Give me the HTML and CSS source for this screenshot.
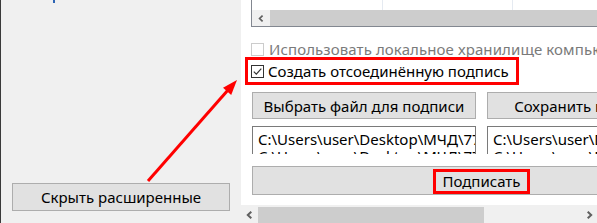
FILE: index.html
```html
<!DOCTYPE html>
<html lang="ru">
<head>
<meta charset="utf-8">
<title>Подпись</title>
<link rel="stylesheet" href="styles.css">
</head>
<body>
<div class="window">
  <aside class="left">
    <div class="caret"></div>
    <button class="btn hide-btn">Скрыть расширенные</button>
  </aside>
  <section class="right">
    <div class="content">
      <div class="listview">
        <div class="rows"><span class="cell"></span><span class="cell"></span><span class="cell last"></span></div>
        <div class="scroll small">
          <span class="sarrow"><svg width="6" height="7" viewBox="0 0 6 7"><path d="M4.6 0.6 L1.6 3.5 L4.6 6.4" fill="none" stroke="#606060" stroke-width="1.7"/></svg></span>
          <span class="thumb fill"></span>
        </div>
      </div>
      <label class="check disabled"><span class="box"></span><span class="label">Использовать локальное хранилище компьютера</span></label>
      <label class="check marked"><span class="box"><svg width="11" height="11" viewBox="0 0 11 11"><path d="M1.8 5.6 L4.3 8.1 L9.3 2.6" fill="none" stroke="#333" stroke-width="1.2"/></svg></span><span class="label">Создать отсоединённую подпись</span></label>
      <div class="pair">
        <button class="btn half">Выбрать файл для подписи</button>
        <button class="btn half">Сохранить подпись как</button>
      </div>
      <div class="pair">
        <div class="textbox">C:\Users\user\Desktop\МЧД\7707083893.xml<br>C:\Users\user\Desktop\МЧД\7707083893.xml</div>
        <div class="textbox">C:\Users\user\Desktop\МЧД\7707083893.xml.sig<br>C:\Users\user\Desktop\МЧД\7707083893.xml.sig</div>
      </div>
      <button class="btn wide"><span class="mark">Подписать</span></button>
    </div>
    <div class="scroll big">
      <span class="sarrow"><svg width="7" height="8" viewBox="0 0 7 8"><path d="M5.3 0.7 L1.8 4 L5.3 7.3" fill="none" stroke="#606060" stroke-width="2"/></svg></span>
      <span class="thumb main"></span>
      <span class="spacer"></span>
      <span class="sarrow right"><svg width="7" height="8" viewBox="0 0 7 8"><path d="M1.7 0.7 L5.2 4 L1.7 7.3" fill="none" stroke="#606060" stroke-width="2"/></svg></span>
    </div>
  </section>
  <svg class="annot" width="597" height="223" viewBox="0 0 597 223">
    <line x1="148" y1="181" x2="228" y2="90" stroke="#ff0000" stroke-width="3"/>
    <polygon points="237,80 223,87.7 231.2,95" fill="#ff0000"/>
  </svg>
</div>
</body>
</html>
```

FILE: styles.css
```css
* { box-sizing: border-box; }
html, body { margin: 0; padding: 0; }
body {
  width: 597px;
  height: 223px;
  overflow: hidden;
  background: #f0f0f0;
  font-family: "Noto Sans", "Open Sans", sans-serif;
  font-size: 15px;
  color: #000;
}
.window {
  position: relative;
  display: flex;
  width: 597px;
  height: 223px;
}
.left {
  width: 241px;
  flex: none;
  border-left: 1px solid #3a3a3a;
  display: flex;
  flex-direction: column;
  padding: 0 11px 12px 11px;
}
.caret {
  width: 2px;
  height: 3px;
  margin-left: 41px;
  background: #2d64b4;
}
.btn {
  font: inherit;
  color: #000;
  background: #e1e1e1;
  border: 1px solid #adadad;
  padding: 0;
  margin: 0;
  display: flex;
  align-items: center;
  justify-content: center;
  white-space: nowrap;
  flex: none;
}
.hide-btn {
  margin-top: auto;
  width: 218px;
  height: 28px;
}
.right {
  flex: 1;
  min-width: 0;
  display: flex;
  flex-direction: column;
  overflow: hidden;
}
.content {
  height: 205px;
  flex: none;
  background: #fff;
  padding-left: 10px;
  display: flex;
  flex-direction: column;
  align-items: flex-start;
  overflow: hidden;
}
.listview {
  width: 480px;
  flex: none;
  border: 1px solid #828790;
  border-top: none;
  background: #fff;
}
.rows {
  height: 10px;
  display: flex;
}
.cell {
  width: 131px;
  flex: none;
  border-right: 1px solid #e5eaf1;
}
.cell + .cell { width: 130px; }
.cell.last { border-right: none; flex: 1; }
.scroll {
  display: flex;
  background: #f0f0f0;
  flex: none;
}
.scroll.small { height: 16px; }
.scroll.big { height: 18px; }
.sarrow {
  width: 18px;
  flex: none;
  display: flex;
  align-items: center;
  justify-content: center;
}
.scroll.big .sarrow { width: 17px; padding-top: 1px; }
.scroll.big .sarrow.right { width: 15px; }
.thumb { background: #cdcdcd; }
.thumb.fill { flex: 1; }
.thumb.main { width: 226px; flex: none; margin-top: 2px; }
.spacer { flex: 1; }
.check {
  display: flex;
  align-items: center;
  gap: 5px;
  white-space: nowrap;
  flex: none;
}
.check.disabled {
  height: 16px;
  margin-top: 14px;
  color: #7a7a7a;
  letter-spacing: 0.1px;
}
.check.marked {
  height: 28px;
  margin-left: -6px;
  border: 3px solid #ff0000;
  padding: 0 7px 0 3px;
  gap: 4px;
}
.box {
  width: 13px;
  height: 13px;
  flex: none;
  border: 1px solid #333;
  background: #fff;
  display: flex;
  align-items: center;
  justify-content: center;
}
.check.disabled .box { border-color: #cccccc; }
.pair {
  display: flex;
  gap: 11px;
  margin-top: 7px;
  margin-left: 1px;
  flex: none;
}
.btn.half {
  width: 224px;
  height: 27px;
}
.textbox {
  width: 224px;
  height: 28px;
  flex: none;
  border: 1px solid #7a7a7a;
  border-bottom: none;
  padding: 4px 0 0 5px;
  line-height: 17px;
  white-space: nowrap;
  overflow: hidden;
  background: #fff;
}
.btn.wide {
  width: 459px;
  height: 29px;
  margin-top: 12px;
  margin-left: 1px;
  padding-top: 1px;
}
.mark {
  display: inline-flex;
  align-items: center;
  height: 25px;
  border: 3px solid #ff0000;
  padding: 0 6px;
}
.annot {
  position: absolute;
  left: 0;
  top: 0;
  pointer-events: none;
}
```
